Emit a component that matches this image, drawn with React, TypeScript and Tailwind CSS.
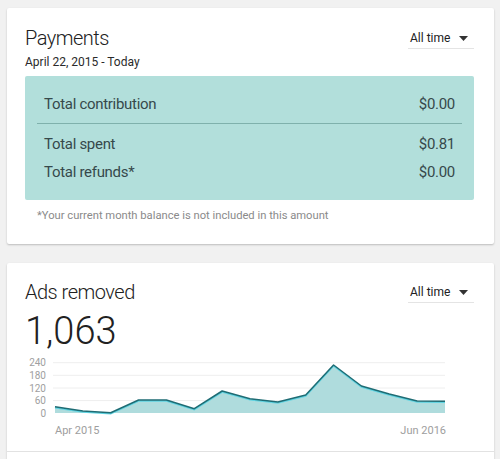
import React from 'react';

const font = { fontFamily: 'Roboto, "Liberation Sans", sans-serif' };
const light = { fontFamily: '"Roboto Light", Roboto, "Liberation Sans", sans-serif' };

const values = [405.7, 410, 411.7, 399, 399, 407.7, 390, 397.7, 401, 394, 364, 385, 393, 400, 400.3];
const pts = values.map((y, i) => [55 + i * 27.857, y] as const);
const line = pts.map(([x, y]) => `${x},${y}`).join(' ');
const area = `55,412 ${line} 445,412`;

const TimeSelect = () => (
  <div className="mt-[2px] flex h-[21px] w-[66px] items-center justify-between border-b border-[#e4e4e4] pl-[2px] pr-[6px]">
    <span className="text-[12px] leading-5 text-[#212121]">All time</span>
    <svg width="9" height="5" viewBox="0 0 9 5">
      <path d="M0 0h9L4.5 5z" fill="#333" />
    </svg>
  </div>
);

const Row = ({ label, amount }: { label: string; amount: string }) => (
  <div className="flex h-7 items-center justify-between text-[15px] tracking-[-0.3px] text-[#36494b]">
    <span>{label}</span>
    <span>{amount}</span>
  </div>
);

const Chart = () => (
  <svg width="449" height="85" viewBox="25 355 449 85" className="mt-[5px] block">
    {[361.7, 374.3, 387, 399.6].map((y) => (
      <line key={y} x1="53" x2="445" y1={y} y2={y} stroke="#eeeeee" strokeWidth="1" />
    ))}
    {[['240', 361.7], ['180', 374.3], ['120', 387], ['60', 399.6], ['0', 412.2]].map(([t, y]) => (
      <text key={t} x="46" y={Number(y) + 3.5} textAnchor="end" fontSize="10" fill="#a0a0a0" style={font}>
        {t}
      </text>
    ))}
    <polygon points={area} fill="#afdcdd" />
    <polyline points={line} fill="none" stroke="#5fd4e2" strokeWidth="1.5" transform="translate(0,1)" />
    <polyline points={line} fill="none" stroke="#1f6c74" strokeWidth="1.5" strokeLinejoin="round" />
    <text x="55" y="432.5" fontSize="11" fill="#9e9e9e" style={font}>Apr 2015</text>
    <text x="446" y="432.5" fontSize="11" fill="#9e9e9e" textAnchor="end" style={font}>Jun 2016</text>
  </svg>
);

export default function App() {
  return (
    <div className="h-[459px] w-[500px] overflow-hidden bg-[#f1f1f1] pl-[7px] pr-[6px] pt-2" style={font}>
      <div className="rounded-[2px] bg-white pb-5 pl-[18px] pr-[20px] pt-[18px] shadow-[0_1px_2px_rgba(0,0,0,0.22)]">
        <div className="flex items-start justify-between">
          <h1 className="text-[20px] font-light leading-6 tracking-[-0.5px] text-[#212121]" style={light}>
            Payments
          </h1>
          <TimeSelect />
        </div>
        <p className="mt-1 text-[12px] leading-4 text-[#2a2a2a]">April 22, 2015 - Today</p>
        <div className="mt-[6px] rounded-[2px] bg-[#b2dfdb] px-[19px] py-[14px]">
          <Row label="Total contribution" amount="$0.00" />
          <div className="-mx-[7px] mb-[6px] mt-[5px] h-px bg-[#7fb1ac]" />
          <Row label="Total spent" amount="$0.81" />
          <Row label="Total refunds*" amount="$0.00" />
        </div>
        <p className="mt-2 pl-3 text-[11.2px] leading-4 text-[#8a8a8a]">
          *Your current month balance is not included in this amount
        </p>
      </div>

      <div className="mt-[19px] rounded-[2px] bg-white pt-[17px] shadow-[0_1px_2px_rgba(0,0,0,0.22)]">
        <div className="pl-[18px] pr-[20px]">
          <div className="flex items-start justify-between">
            <h2 className="text-[20px] font-light leading-6 tracking-[-0.5px] text-[#212121]" style={light}>
              Ads removed
            </h2>
            <TimeSelect />
          </div>
          <div className="mt-[7px] text-[38px] font-light leading-10 text-[#212121]" style={light}>
            1,063
          </div>
          <Chart />
        </div>
        <div className="mt-[10px] h-12 border-t border-[#e2e2e2]" />
      </div>
    </div>
  );
}
